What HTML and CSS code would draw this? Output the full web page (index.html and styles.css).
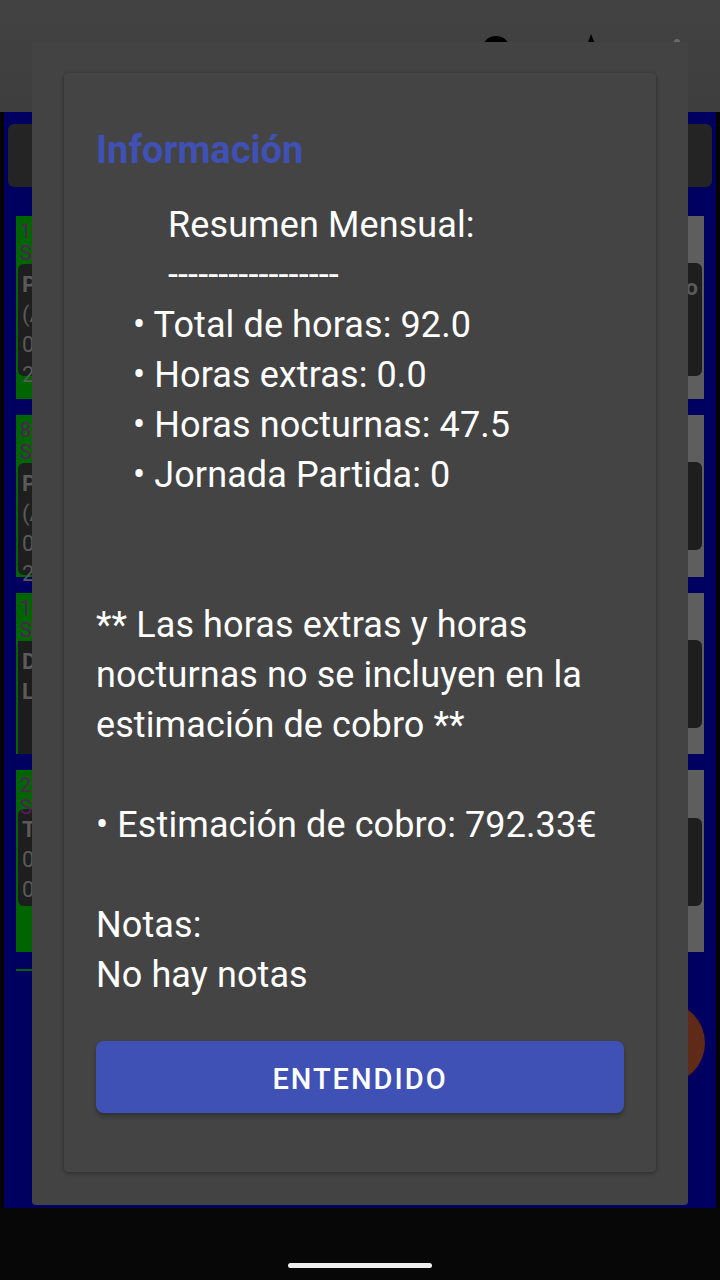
FILE: index.html
```html
<!DOCTYPE html>
<html lang="es">
<head>
<meta charset="utf-8">
<title>Información</title>
<link rel="stylesheet" href="styles.css">
</head>
<body>
<div class="screen">
  <header class="appbar">
    <span class="icon-circle"></span>
    <span class="icon-tri"></span>
    <span class="icon-dot"></span>
  </header>
  <main class="content">
    <div class="search"></div>
    <div class="list">
      <div class="row r1">
        <div class="col left">
          <div class="lbl">1</div><div class="lbl">S</div>
          <div class="box b1"><b>P</b><span>(A</span><span>0</span><span>2</span></div>
        </div>
        <div class="col right">
          <div class="box b1r"><b class="rt">o</b></div>
        </div>
      </div>
      <div class="row r2">
        <div class="col left">
          <div class="lbl">8</div><div class="lbl">S</div>
          <div class="box b2"><b>P</b><span>(A</span><span>0</span><span>2</span></div>
        </div>
        <div class="col right">
          <div class="box b2r"></div>
        </div>
      </div>
      <div class="row r3">
        <div class="col left outlined">
          <div class="lbl">1</div><div class="lbl">S</div>
          <div class="box b3"><b>D</b><b>L</b></div>
        </div>
        <div class="col right">
          <div class="box b3r"></div>
        </div>
      </div>
      <div class="row r4">
        <div class="col left">
          <div class="lbl">2</div><div class="lbl">S</div>
          <div class="box b4"><b>T</b><span>0</span><span>0</span></div>
        </div>
        <div class="col right">
          <div class="box b4r"></div>
        </div>
      </div>
      <div class="divider"></div>
    </div>
  </main>
  <nav class="navbar"><span class="home"></span></nav>
  <div class="fab"></div>

  <div class="dialog">
    <div class="card">
      <h2 class="title">Información</h2>
      <div class="body">
        <p class="ln ind2">Resumen Mensual:</p>
        <p class="ln ind2">-----------------</p>
        <p class="ln ind1">• Total de horas: 92.0</p>
        <p class="ln ind1">• Horas extras: 0.0</p>
        <p class="ln ind1">• Horas nocturnas: 47.5</p>
        <p class="ln ind1">• Jornada Partida: 0</p>
        <div class="blank"></div>
        <div class="blank"></div>
        <p class="ln">** Las horas extras y horas</p>
        <p class="ln">nocturnas no se incluyen en la</p>
        <p class="ln">estimación de cobro **</p>
        <div class="blank"></div>
        <p class="ln">• Estimación de cobro: 792.33€</p>
        <div class="blank"></div>
        <p class="ln">Notas:</p>
        <p class="ln">No hay notas</p>
      </div>
      <button class="btn">ENTENDIDO</button>
    </div>
  </div>
</div>
</body>
</html>
```
FILE: styles.css
```css
* { box-sizing: border-box; }
html, body { margin: 0; padding: 0; background: #070707; }
body { font-family: Roboto, "Noto Sans", sans-serif; }

.screen {
  position: relative;
  width: 720px;
  height: 1280px;
  display: flex;
  flex-direction: column;
  overflow: hidden;
}

.appbar {
  height: 112px;
  flex: none;
  background: linear-gradient(#424242, #3e3e3e);
  display: flex;
  align-items: flex-start;
  padding: 34px 0 0 482px;
}
.icon-circle {
  width: 28px; height: 28px; margin-top: 2px;
  border-radius: 50%; background: #000;
}
.icon-tri {
  width: 0; height: 0; margin-left: 73px;
  border-left: 8px solid transparent;
  border-right: 9px solid transparent;
  border-bottom: 22px solid #000;
}
.icon-dot {
  width: 6px; height: 6px; margin: 5px 0 0 74px;
  border-radius: 50%; background: #6a6a6a;
}

.content {
  flex: 1;
  background: #000060;
  border-left: 4px solid #050505;
  border-right: 4px solid #050505;
  padding: 12px 4px 0;
}
.search {
  height: 63px;
  border-radius: 6px;
  background: #242424;
}
.list {
  padding: 29px 8px 0;
  display: flex;
  flex-direction: column;
  gap: 16px;
}
.row {
  display: grid;
  grid-template-columns: 1fr 1fr;
}
.r1 { height: 183px; }
.r2 { height: 162px; }
.r3 { height: 161px; }
.r4 { height: 182px; }
.col { padding: 0 2px; }
.left { background: #006400; padding-top: 4px; }
.right { background: #5e5e5e; padding-top: 47px; }
.r4 .right { padding-top: 48px; }
.outlined {
  background: linear-gradient(#006400 0 48px, #1c1c1c 48px);
  border-left: 2px solid #006400;
  padding-left: 0;
}
.lbl {
  font-size: 20px;
  line-height: 22px;
  color: #5a1a60;
  padding-left: 2px;
}
.box {
  background: #1e1e1e;
  border-radius: 6px;
  display: flex;
  flex-direction: column;
  padding: 6px 4px;
  color: #5a5a5a;
  font-size: 22px;
  line-height: 30px;
}
.box b { font-weight: 700; }
.b1 { height: 112px; }
.b1r { height: 113px; align-items: flex-end; }
.rt { margin-top: 4px; }
.b2 { height: 112px; }
.b2r { height: 88px; }
.b3 { height: 112px; border-radius: 0 6px 6px 0; background: #1c1c1c; }
.b3r { height: 88px; }
.b4 { height: 97px; }
.b4r { height: 88px; }
.r4 .left .lbl:nth-child(2) { margin-bottom: -9px; }
.divider {
  height: 2px;
  background: #006400;
  width: 50%;
  margin-top: 1px;
}

.fab {
  position: absolute;
  left: 623px;
  top: 1002px;
  width: 82px;
  height: 82px;
  border-radius: 50%;
  background: #5f2a18;
}

.navbar {
  height: 72px;
  flex: none;
  background: #070707;
  display: flex;
  justify-content: center;
  padding-top: 55px;
}
.home {
  width: 144px;
  height: 5px;
  border-radius: 3px;
  background: #eeeeee;
}

.dialog {
  position: absolute;
  left: 32px;
  top: 42px;
  width: 656px;
  height: 1163px;
  background: #434343;
  border-radius: 4px;
  padding: 31px 32px 33px;
}
.card {
  height: 1099px;
  background: #444444;
  border-radius: 4px;
  box-shadow: 0 1px 4px rgba(0,0,0,0.35);
  padding: 54px 32px 59px;
  display: flex;
  flex-direction: column;
}
.title {
  margin: 0 0 27px;
  font-size: 38px;
  line-height: 46px;
  font-weight: 700;
  color: #3f51b5;
}
.body { color: #ffffff; font-size: 36px; letter-spacing: 0.1px; }
.ln {
  margin: 0;
  height: 50px;
  line-height: 50px;
  white-space: nowrap;
}
.ind1 { padding-left: 37px; }
.ind2 { padding-left: 72px; }
.blank { height: 50px; }
.btn {
  margin-top: 41px;
  height: 72px;
  border: none;
  border-radius: 8px;
  background: #3f51b5;
  color: #ffffff;
  font-family: Roboto, sans-serif;
  font-weight: 500;
  font-size: 29px;
  letter-spacing: 2px;
  padding-top: 4px;
  box-shadow: 0 3px 5px rgba(0,0,0,0.3);
}
```
